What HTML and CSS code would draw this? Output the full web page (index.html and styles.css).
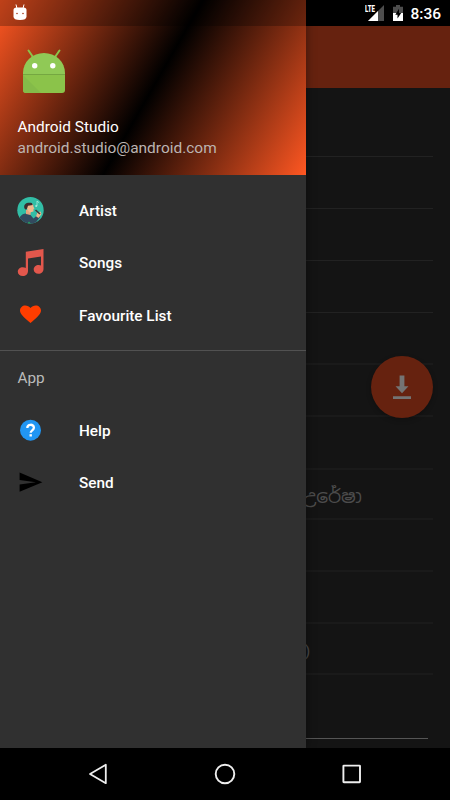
FILE: index.html
```html
<!DOCTYPE html>
<html lang="en">
<head>
    <meta charset="UTF-8">
    <meta name="viewport" content="width=device-width, initial-scale=1.0">
    <title>Music Player</title>
    <link rel="stylesheet" href="styles.css">
</head>
<body>
    <!-- Song list behind the drawer -->
    <main class="screen">
        <div class="status-strip"></div>
        <div class="toolbar"></div>
        <ul class="song-list">
            <li class="thin"></li>
            <li class="thin"></li>
            <li class="thin"></li>
            <li class="thin"></li>
            <li></li>
            <li></li>
            <li></li>
            <li class="short"><span class="song">උරේෂා</span></li>
            <li></li>
            <li></li>
            <li class="short"><span class="song bracket">)</span></li>
        </ul>
        <div class="seek-line"></div>
        <button class="fab" aria-label="Download">
            <svg width="18" height="25" viewBox="0 0 18 25">
                <path d="M6.600 0.500h4.800v10.800h4.100L9 18.200l-6.500-6.900h4.100zM0 21.300h18v2.600H0z" fill="#747474"/>
            </svg>
        </button>
    </main>

    <!-- Navigation drawer -->
    <aside class="drawer">
        <header class="drawer-header">
            <svg class="logo" width="44" height="45" viewBox="0 0 44 45">
                <path d="M6.500 1.500l4.500 6.500M37.500 1.500l-4.500 6.500" stroke="#8bc34a" stroke-width="2" stroke-linecap="round"/>
                <path d="M1 26v-2a21 20 0 0 1 42 0v2z" fill="#90c956"/>
                <path d="M1 25.500h42V41a3 3 0 0 1-3 3H4a3 3 0 0 1-3-3z" fill="#8bc34a"/>
                <path d="M1 26l18 18H4a3 3 0 0 1-3-3z" fill="#84bb49"/>
                <path d="M1 25.500h42" stroke="#6f9f3e" stroke-width=".8"/>
                <circle cx="12.700" cy="16.800" r="2.700" fill="#fff"/>
                <circle cx="30.800" cy="16.800" r="2.700" fill="#fff"/>
            </svg>
            <div class="name">Android Studio</div>
            <div class="email">android.studio@android.com</div>
        </header>
        <nav class="menu">
            <a class="item">
                <svg width="27" height="27" viewBox="0 0 27 27">
                    <clipPath id="disc"><circle cx="13.500" cy="13.200" r="13.200"/></clipPath>
                    <g clip-path="url(#disc)">
                        <rect width="27" height="27" fill="#32bea6"/>
                        <path d="M1 26c1-6 3-9 8-9.500l4 1 3.500 4 4-3.500 2.500 2-4.500 6-4 2z" fill="#324a5e"/>
                        <path d="M9 13h5l-.5 5-4.500-1z" fill="#e6a47f"/>
                        <path d="M9.500 8l6.500-1 .5 3 1 1.500-1 .5v2.500l-4 1-3-4z" fill="#f1b98f"/>
                        <path d="M7.500 11.500C6 7 10 5 14.800 6l1 2-4.800.8-1 3-1.200 1z" fill="#3b2c2f"/>
                        <path d="M20.500 15.500l3-1 1 2.500-3 4-2.500-1.800z" fill="#f1b98f"/>
                        <path d="M18.500 13l4.500 4" stroke="#3b3b3b" stroke-width="1.600"/>
                        <path d="M20 9V4l2.200 1.800" fill="none" stroke="#a9e9dd" stroke-width=".8"/>
                        <circle cx="19.200" cy="9" r="1" fill="#a9e9dd"/>
                        <path d="M12 24.500l2 2.500h-4z" fill="#25ae5f"/>
                    </g>
                </svg>
                <span>Artist</span>
            </a>
            <a class="item">
                <svg width="27" height="27" viewBox="0 0 27 27">
                    <path d="M8.800 2.700L26.500 0v20c0 3-2.200 4.800-5 4.800s-4.800-1.700-4.800-4.200 2.200-4.500 5-4.500c1 0 1.800.2 2.300.5V7.600l-13 1.800V22c0 3-2.200 5-5.200 5S.8 25.300.8 22.800s2.200-4.500 5-4.500c1.200 0 2.300.3 3 .8z" fill="#e2574c"/>
                </svg>
                <span>Songs</span>
            </a>
            <a class="item">
                <svg width="27" height="27" viewBox="0 0 27 27">
                    <path d="M13.500 22l-1.500-1.300C6.500 15.900 3 12.900 3 9.500 3 6.600 5.500 4.500 8.300 4.500c2 0 4 .9 5.200 2.400 1.200-1.500 3.200-2.400 5.200-2.400 2.800 0 5.300 2.100 5.300 5 0 3.400-3.500 6.400-9 11.200z" fill="#ff3d00"/>
                </svg>
                <span>Favourite List</span>
            </a>
        </nav>
        <div class="section-title">App</div>
        <nav class="menu">
            <a class="item">
                <svg width="27" height="27" viewBox="0 0 27 27">
                    <circle cx="13.500" cy="13.200" r="10.500" fill="#2196f3"/>
                    <path d="M10.300 11c0-4.300 6.600-4.200 6.600-.3 0 2.600-3.200 2.700-3.200 5.100" fill="none" stroke="#fff" stroke-width="2.300"/>
                    <rect x="12.500" y="17.200" width="2.400" height="2.300" fill="#fff"/>
                </svg>
                <span>Help</span>
            </a>
            <a class="item">
                <svg width="27" height="27" viewBox="0 0 27 27">
                    <path d="M2.600 22.800l22.800-9.600L2.600 3.500v7.400l16.300 2.300-16.300 2.200z" fill="#000"/>
                </svg>
                <span>Send</span>
            </a>
        </nav>
    </aside>

    <!-- System status bar -->
    <div class="status-bar">
        <svg class="notif" width="14" height="17" viewBox="0 0 14 17">
            <path d="M3 .5l1 4M11 .5l-1 4" stroke="#fff" stroke-width="1"/>
            <path d="M.5 6q0-2.500 3-2.500h7q3 0 3 2.500v6.500q0 3.500-6.500 3.500T.5 12.500z" fill="#fff"/>
            <circle cx="4" cy="9.500" r=".8" fill="#a23a1d"/>
            <circle cx="10" cy="9.500" r=".8" fill="#a23a1d"/>
        </svg>
        <div class="status-icons">
            <span class="lte">LTE</span>
            <svg class="signal" width="16" height="16" viewBox="0 0 16 16">
                <path d="M16 0v16H0z" fill="#4d4d4d"/>
                <path d="M10 6v10H0z" fill="#fff"/>
            </svg>
            <svg class="battery" width="10" height="16" viewBox="0 0 10 16">
                <path d="M0 1.800h3V0h4v1.800h3V8H0z" fill="#4d4d4d"/>
                <path d="M0 8h10v8H0z" fill="#fff"/>
                <path d="M6 3.800L2.300 9.700h2.200V13.500L8.200 8H6z" fill="#000"/>
            </svg>
            <span class="clock">8:36</span>
        </div>
    </div>

    <!-- System navigation bar -->
    <footer class="nav-bar">
        <svg width="20" height="22" viewBox="0 0 20 22">
            <path d="M17.800 1.800v18.400L2 11z" fill="none" stroke="#eee" stroke-width="1.800" stroke-linejoin="round"/>
        </svg>
        <svg width="22" height="22" viewBox="0 0 22 22">
            <circle cx="11" cy="11" r="9.300" fill="none" stroke="#eee" stroke-width="1.900"/>
        </svg>
        <svg width="20" height="20" viewBox="0 0 20 20">
            <rect x="1.400" y="1.600" width="16.600" height="16.600" rx=".5" fill="none" stroke="#eee" stroke-width="1.900"/>
        </svg>
    </footer>
</body>
</html>
```
FILE: styles.css
```css
body {
    position: relative;
    width: 450px;
    height: 800px;
    margin: 0;
    overflow: hidden;
    background: #000;
    font-family: Roboto, "Noto Sans", sans-serif;
    display: flex;
    flex-direction: column;
}

.screen {
    height: 748px;
    background: #141414;
    display: flex;
    flex-direction: column;
}

.status-strip {
    height: 26px;
    background: #000;
}

.toolbar {
    height: 61.500px;
    background: #66220f;
}

.song-list {
    list-style: none;
    margin: 0 17px;
    padding: 17.500px 0 0;
}

.song-list li {
    box-sizing: border-box;
    height: 52.200px;
    border-bottom: 2px solid #1a1a1a;
    padding-left: 286px;
    display: flex;
    align-items: center;
}

.song-list .thin {
    height: 52px;
    border-bottom: 1px solid #222;
}

.song-list .short {
    height: 50.300px;
}

.song {
    padding-top: 5px;
    font-family: "Noto Sans Sinhala", "Noto Sans", sans-serif;
    font-size: 18.700px;
    color: #4c4c4c;
    white-space: nowrap;
}

.song.bracket {
    padding: 5px 0 0 2px;
    font-family: Roboto, sans-serif;
    font-size: 15px;
}

.seek-line {
    margin: auto 22px 9px 17px;
    height: 1px;
    background: #555;
}

.fab {
    position: absolute;
    left: 371px;
    top: 356px;
    width: 62px;
    height: 62px;
    padding: 0;
    border: none;
    border-radius: 50%;
    background: #66220f;
    box-shadow: 0 2px 5px rgba(0,0,0,0.25);
    display: flex;
    align-items: center;
    justify-content: center;
}

.drawer {
    position: absolute;
    left: 0;
    top: 0;
    width: 306px;
    height: 747.500px;
    background: #303030;
    box-shadow: 0 0 10px rgba(0,0,0,0.4);
}

.drawer-header {
    box-sizing: border-box;
    height: 175px;
    padding: 49px 0 0 17.500px;
    background: linear-gradient(119.800deg, #ff5722, #000 50%, #ff5722);
}

.logo {
    display: block;
    margin-left: 4px;
}

.name {
    margin-top: 22.500px;
    font-size: 15.400px;
    line-height: 21px;
    color: #fff;
}

.email {
    font-size: 15.450px;
    line-height: 21px;
    color: #bcb4b2;
}

.menu {
    padding-top: 9px;
}

.item {
    height: 52.300px;
    padding-left: 17px;
    display: flex;
    align-items: center;
    gap: 35px;
    font-size: 15.300px;
    font-weight: 500;
    color: #fff;
}

.item span {
    padding-top: 2px;
}

.section-title {
    box-sizing: border-box;
    height: 45px;
    margin-top: 9px;
    padding: 18px 0 0 17.500px;
    border-top: 1px solid #515151;
    font-size: 15.300px;
    line-height: 18px;
    color: #bbb;
}

.status-bar {
    position: absolute;
    left: 0;
    top: 0;
    width: 450px;
    height: 26px;
    box-sizing: border-box;
    padding: 0 9px 0 13px;
    background: rgba(0,0,0,0.25);
    display: flex;
    justify-content: space-between;
}

.notif {
    margin-top: 3.500px;
}

.status-icons {
    display: flex;
    align-items: flex-start;
}

.lte {
    width: 12px;
    margin: 4px -9px 0 0;
    font-size: 9.500px;
    line-height: 10px;
    font-weight: 900;
    color: #fff;
    transform: scaleX(0.64);
    transform-origin: left;
}

.signal {
    margin-top: 5px;
}

.battery {
    margin: 5px 7.500px 0 9px;
}

.clock {
    font-size: 15.500px;
    line-height: 28px;
    font-weight: 500;
    color: #fff;
}

.nav-bar {
    height: 52px;
    padding: 0 88px;
    display: flex;
    align-items: center;
    justify-content: space-between;
}
```
